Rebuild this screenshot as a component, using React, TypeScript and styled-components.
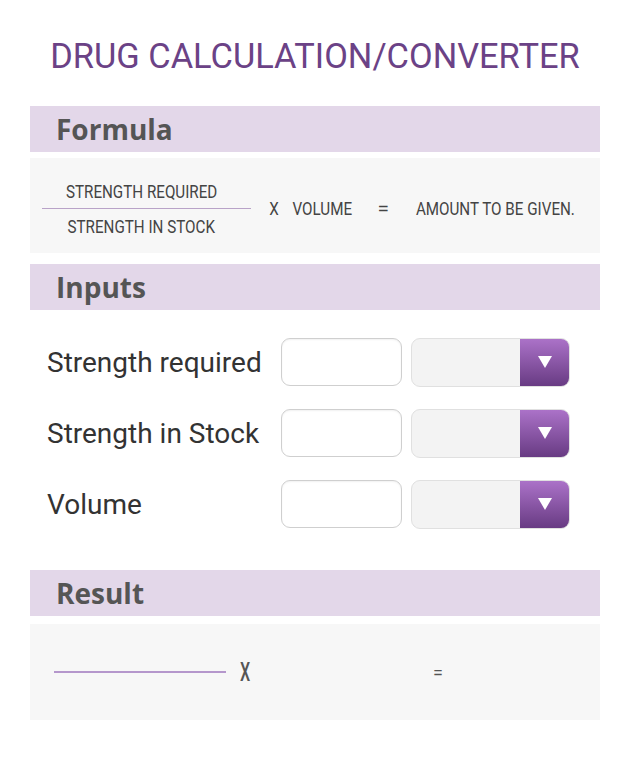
import React from "react";
import styled, { createGlobalStyle } from "styled-components";

const Global = createGlobalStyle`
  html, body { margin: 0; padding: 0; background: #ffffff; }
  body { font-family: Roboto, "Noto Sans", sans-serif; }
`;

const Page = styled.div`
  width: 636px;
  padding: 36px 36px 40px 30px;
  box-sizing: border-box;
`;

const Title = styled.h1`
  margin: 0 0 30px -30px;
  width: 630px;
  text-align: center;
  font-family: Roboto, sans-serif;
  font-weight: 400;
  font-size: 34.4px;
  line-height: 40px;
  color: #6b4286;
`;

const Band = styled.div<{ $gap?: number }>`
  height: 46px;
  margin-top: ${(p) => p.$gap ?? 0}px;
  background: #e3d7e9;
  display: flex;
  align-items: center;
  padding-left: 26px;
  font-family: "Open Sans", sans-serif;
  font-weight: 700;
  font-size: 28px;
  color: #555555;
`;

const Panel = styled.div`
  margin-top: 6px;
  height: 95px;
  background: #f7f7f7;
  display: flex;
  align-items: center;
  padding: 6px 0 0 12px;
  box-sizing: border-box;
`;

const Fraction = styled.div`
  width: 209px;
  display: flex;
  flex-direction: column;
  align-items: center;
`;

const Cond = styled.span<{ $sx?: number }>`
  display: inline-block;
  font-family: Roboto, sans-serif;
  font-size: 19px;
  line-height: 1;
  color: #444444;
  transform: scaleX(${(p) => p.$sx ?? 0.8});
  white-space: nowrap;
`;

const FracText = styled.div`
  height: 19px;
  display: flex;
  justify-content: center;
  width: 100%;
  padding-right: 10px;
  box-sizing: border-box;
`;

const FracLine = styled.div`
  width: 100%;
  height: 1px;
  background: #b9a3c8;
  margin: 7px 0 8px;
`;

const Slot = styled.div<{ $w: number }>`
  width: ${(p) => p.$w}px;
  display: flex;
  justify-content: center;
`;

const Rows = styled.div`
  padding: 28px 0 42px 17px;
  display: flex;
  flex-direction: column;
  gap: 23px;
`;

const Row = styled.div`
  display: flex;
  align-items: center;
  height: 48px;
`;

const Label = styled.div`
  width: 234px;
  font-family: Roboto, sans-serif;
  font-size: 28px;
  color: #333333;
  white-space: nowrap;
`;

const TextBox = styled.input`
  width: 121px;
  height: 48px;
  box-sizing: border-box;
  border: 1.5px solid #cfcfcf;
  border-radius: 9px;
  background: #ffffff;
  box-shadow: inset 0 1px 2px rgba(0, 0, 0, 0.06);
  outline: none;
`;

const Select = styled.div`
  margin-left: 9px;
  width: 159px;
  height: 49px;
  box-sizing: border-box;
  border: 1px solid #e0e0e0;
  border-radius: 9px;
  background: #f3f3f3;
  display: flex;
  justify-content: flex-end;
  overflow: hidden;
`;

const Arrow = styled.div`
  width: 49px;
  height: 100%;
  background: linear-gradient(#ab72c8, #683b83);
  display: flex;
  align-items: center;
  justify-content: center;
`;

const ResultPanel = styled.div`
  margin-top: 8px;
  height: 96px;
  background: #f7f7f7;
  display: flex;
  align-items: center;
  padding-left: 24px;
  box-sizing: border-box;
`;

const ResultLine = styled.div`
  width: 172px;
  height: 2px;
  background: #b597cc;
  margin-right: 14px;
`;

const ResultOp = styled.span<{ $w: number }>`
  display: inline-block;
  width: ${(p) => p.$w}px;
  font-family: Roboto, sans-serif;
  font-weight: 500;
  font-size: 26px;
  color: #555555;
  transform: scaleX(0.62);
  transform-origin: left center;
`;

const SmallEq = styled.span`
  font-family: Roboto, sans-serif;
  font-size: 18px;
  color: #555555;
`;

const Tri = () => (
  <svg width="16" height="14" viewBox="0 0 16 14">
    <path d="M1 1 L15 1 L8 13 Z" fill="#ffffff" />
  </svg>
);

const inputs = ["Strength required", "Strength in Stock", "Volume"];

export default function App() {
  return (
    <Page>
      <Global />
      <Title>DRUG CALCULATION/CONVERTER</Title>
      <Band>Formula</Band>
      <Panel>
        <Fraction>
          <FracText>
            <Cond>STRENGTH REQUIRED</Cond>
          </FracText>
          <FracLine />
          <FracText>
            <Cond>STRENGTH IN STOCK</Cond>
          </FracText>
        </Fraction>
        <Slot $w={46}>
          <Cond>X</Cond>
        </Slot>
        <Slot $w={50}>
          <Cond>VOLUME</Cond>
        </Slot>
        <Slot $w={73}>
          <Cond $sx={1.1}>=</Cond>
        </Slot>
        <Slot $w={150}>
          <Cond>AMOUNT TO BE GIVEN.</Cond>
        </Slot>
      </Panel>
      <Band $gap={11}>Inputs</Band>
      <Rows>
        {inputs.map((l) => (
          <Row key={l}>
            <Label>{l}</Label>
            <TextBox />
            <Select>
              <Arrow>
                <Tri />
              </Arrow>
            </Select>
          </Row>
        ))}
      </Rows>
      <Band>Result</Band>
      <ResultPanel>
        <ResultLine />
        <ResultOp $w={193}>X</ResultOp>
        <SmallEq>=</SmallEq>
      </ResultPanel>
    </Page>
  );
}
